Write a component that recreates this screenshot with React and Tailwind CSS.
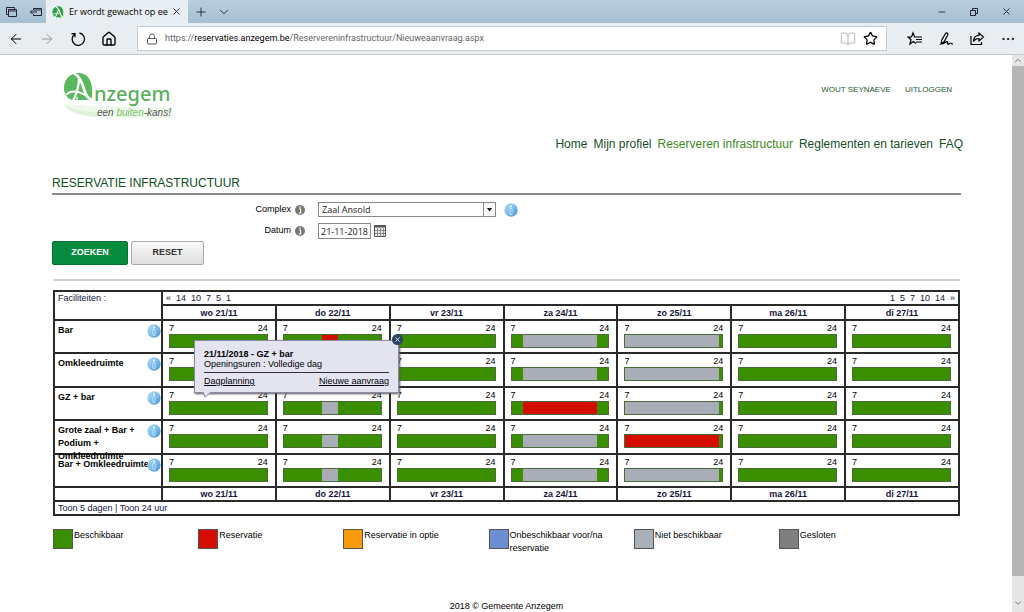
import React from "react";
import {
  ArrowLeft,
  ArrowRight,
  BookOpen,
  ChevronDown,
  ChevronUp,
  Ellipsis,
  House,
  Lock,
  Minus,
  Plus,
  Star,
  X,
} from "lucide-react";

const days = ["wo 21/11", "do 22/11", "vr 23/11", "za 24/11", "zo 25/11", "ma 26/11", "di 27/11"];

const open = [["free", 100]];
const weekend = [["free", 12], ["closed", 76], ["free", 12]];
const sunday = [["closed", 97], ["free", 3]];
const middle = [["free", 39], ["closed", 17], ["free", 44]];

const facilities = [
  { name: "Bar", slots: [open, [["free", 39], ["booked", 17], ["free", 44]], open, weekend, sunday, open, open] },
  { name: "Omkleedruimte", slots: [open, middle, open, weekend, sunday, open, open] },
  { name: "GZ + bar", slots: [open, middle, open, [["free", 12], ["booked", 76], ["free", 12]], sunday, open, open] },
  {
    name: "Grote zaal + Bar + Podium + Omkleedruimte",
    slots: [open, middle, open, weekend, [["booked", 97], ["free", 3]], open, open],
  },
  { name: "Bar + Omkleedruimte", slots: [open, middle, open, weekend, sunday, open, open] },
];

const slotColors = {
  free: "bg-[#3a8f00]",
  booked: "bg-[#d40d00]",
  closed: "bg-[#a9adb8]",
};

const legend = [
  { label: "Beschikbaar", color: "bg-[#3a8f00]" },
  { label: "Reservatie", color: "bg-[#d40d00]" },
  { label: "Reservatie in optie", color: "bg-[#f89a0c]" },
  { label: "Onbeschikbaar voor/na reservatie", color: "bg-[#6c8fd4]" },
  { label: "Niet beschikbaar", color: "bg-[#a9b0b8]" },
  { label: "Gesloten", color: "bg-[#7f7f7f]" },
];

const navItems = ["Home", "Mijn profiel", "Reserveren infrastructuur", "Reglementen en tarieven", "FAQ"];

function LeafMark({ className }) {
  return (
    <svg viewBox="0 0 30 30" className={className} aria-hidden="true">
      <path d="M14 1C6 2 1 7 1 15c0 6 3 11 8 13h19V15C28 6 22 0 14 1z" fill="#2f9e3c" />
      <g fill="none" stroke="#fff" strokeLinecap="round">
        <path d="M11 3c6 3 9 12 11 19 1 3 3 5 6 6" strokeWidth="3" />
        <path d="M16 8c-1 7-4 14-8 20" strokeWidth="2.6" />
        <path d="M4 20c5-4 12-3 18 1" strokeWidth="2" />
      </g>
    </svg>
  );
}

function Logo() {
  return (
    <svg viewBox="0 0 112 50" className="w-28 h-[50px]" role="img" aria-label="Anzegem">
      <path d="M2 33c16 2 62 3 108 4v10C60 48 8 46 2 33z" fill="#eef9eb" />
      <path d="M2 33c4 5 20 8 34 8v5C18 45 5 41 2 33z" fill="#dcf3d8" />
      <path d="M15 2C7 3 2 9 2 17c0 6 3 10 8 12h20V18C30 8 24 1 15 2z" fill="#5ab95f" />
      <g fill="none" stroke="#fff" strokeLinecap="round">
        <path d="M13 3c6 3 8 12 10 18 1 4 3 7 8 8" strokeWidth="2.8" />
        <path d="M17 7c0 8-2 15-6 23" strokeWidth="2.2" />
        <path d="M5 23c3-3 10-4 18 1" strokeWidth="1.8" />
        <path d="M15 26v4" strokeWidth="1.2" />
      </g>
      <text x="32" y="30" fontSize="20" fontWeight="500" fontFamily="Noto Sans, sans-serif" fill="#5ab05c">nzegem</text>
      <text x="35" y="45" fontSize="10" fontStyle="italic" fontFamily="Liberation Sans, sans-serif" fill="#555">
        een <tspan fill="#7ac46a">buiten</tspan>-kans!
      </text>
    </svg>
  );
}

function InfoBall({ className = "" }) {
  return (
    <svg viewBox="0 0 14 14" className={`w-[14px] h-[14px] shrink-0 ${className}`} aria-hidden="true">
      <defs>
        <linearGradient id="ball" x1="0" y1="0" x2="1" y2="1">
          <stop offset="0" stopColor="#b9dff7" />
          <stop offset="0.5" stopColor="#7dbdec" />
          <stop offset="1" stopColor="#3f8fd6" />
        </linearGradient>
      </defs>
      <circle cx="7" cy="7" r="6.700" fill="url(#ball)" />
      <circle cx="7" cy="3.500" r="1" fill="#fff" />
      <rect x="6" y="5.500" width="2" height="6" rx="0.500" fill="#5aa5e0" stroke="#fff" strokeWidth="0.700" />
    </svg>
  );
}

function InfoDot() {
  return (
    <svg viewBox="0 0 10 10" className="w-[10px] h-[10px] shrink-0" aria-hidden="true">
      <circle cx="5" cy="5" r="5" fill="#777" />
      <path d="M4 4h1.600v3.600M3.800 7.800h2.600M4.400 2.200h1.400" stroke="#fff" strokeWidth="1.200" fill="none" />
    </svg>
  );
}

function Browser() {
  return (
    <>
      {/* Title bar */}
      <div className="h-[23px] shrink-0 flex items-center bg-linear-to-b from-[#b9cede] to-[#a6bfd1] text-[#223]">
        <div className="w-[46px] flex items-center gap-3 pl-[6px] shrink-0">
          <svg viewBox="0 0 12 12" className="w-3 h-3" fill="none" stroke="currentColor" aria-hidden="true">
            <path d="M2.500 8.500h-2v-7h8v2M2.500 3.500h8v7h-8zM2.500 5h8" />
          </svg>
          <svg viewBox="0 0 12 12" className="w-3 h-3" fill="none" stroke="currentColor" aria-hidden="true">
            <path d="M3.500 4V2.500h8v7h-8V8M3.500 4h8M0.500 6H7M2.500 4l-2 2 2 2" />
          </svg>
        </div>
        <div className="w-[142px] h-full bg-[#e9eef2] flex items-center px-[6px]">
          <LeafMark className="w-3 h-3 shrink-0" />
          <span className="ml-[5px] flex-1 overflow-hidden whitespace-nowrap text-[9px] text-black font-['Open_Sans',sans-serif]">
            Er wordt gewacht op ee
          </span>
          <button aria-label="Tab sluiten"><X className="w-[11px] h-[11px]" strokeWidth={2} /></button>
        </div>
        <button className="ml-[6px]" aria-label="Nieuw tabblad"><Plus className="w-[14px] h-[14px]" strokeWidth={1.5} /></button>
        <button className="ml-[9px]" aria-label="Tabbladen"><ChevronDown className="w-[14px] h-[14px]" strokeWidth={1.5} /></button>
        <div className="ml-auto flex items-center gap-[22px] pr-3">
          <button aria-label="Minimaliseren"><Minus className="w-[10px] h-[10px]" /></button>
          <button aria-label="Vorig formaat">
            <svg viewBox="0 0 10 10" className="w-[10px] h-[10px]" fill="none" stroke="currentColor" aria-hidden="true">
              <path d="M1.500 3.500h5v5h-5zM3.500 3.500v-2h5v5h-2" />
            </svg>
          </button>
          <button aria-label="Sluiten"><X className="w-[11px] h-[11px]" /></button>
        </div>
      </div>

      {/* Address bar */}
      <div className="h-8 shrink-0 flex items-center bg-[#e8edf1] border-b border-[#c3c8cc] text-black">
        <div className="w-[137px] shrink-0 flex items-center gap-[15px] pl-2">
          <button aria-label="Terug"><ArrowLeft className="w-4 h-4" strokeWidth={1.5} /></button>
          <button aria-label="Vooruit" className="text-[#999]"><ArrowRight className="w-4 h-4" strokeWidth={1.5} /></button>
          <button aria-label="Vernieuwen">
            <svg viewBox="0 0 16 16" className="w-4 h-4" fill="none" stroke="currentColor" strokeWidth="1.300" aria-hidden="true">
              <path d="M9.500 2a6.200 6.200 0 1 1-5 1.200M1.500 2.700h3.500v3.500" />
            </svg>
          </button>
          <button aria-label="Startpagina"><House className="w-4 h-4" strokeWidth={2} /></button>
        </div>
        <div className="flex-1 h-[25px] bg-white border border-[#c4c9cd] flex items-center px-2">
          <Lock className="w-3 h-3 text-[#444]" strokeWidth={1.8} />
          <span className="ml-[7px] flex-1 text-[9px] text-[#666] whitespace-nowrap font-[Roboto,sans-serif]">
            https://<span className="text-black">reservaties.anzegem.be</span>/Reservereninfrastructuur/Nieuweaanvraag.aspx
          </span>
          <BookOpen className="w-4 h-4 text-[#bbb]" strokeWidth={1.5} />
          <Star className="w-[15px] h-[15px] ml-[7px]" strokeWidth={2} />
        </div>
        <div className="flex items-center gap-[15px] pl-5 pr-2">
          <button aria-label="Hub">
            <svg viewBox="0 0 16 16" className="w-4 h-4" fill="none" stroke="currentColor" strokeWidth="1.200" aria-hidden="true">
              <path d="M8.500 6H7.600L6 2 4.500 6H1l3 2.700L3 13l3.300-2.500L9 12.500M8.500 6H15M9 8.500h6M9 11h6" />
            </svg>
          </button>
          <button aria-label="Notities">
            <svg viewBox="0 0 16 16" className="w-4 h-4" fill="none" stroke="currentColor" strokeWidth="1.200" aria-hidden="true">
              <path d="M3 13l.8-4L7.500 2.500c.8-1.300 3-.3 2.300 1.200L6.300 10.500 3 13c3.500-.3 5.500-3 6.500-2.200s-.8 2.400.7 2.400 1.300-1.200 2.300-1.200.8 1 2.500.8" />
            </svg>
          </button>
          <button aria-label="Delen">
            <svg viewBox="0 0 16 16" className="w-4 h-4" fill="none" stroke="currentColor" strokeWidth="1.200" aria-hidden="true">
              <path d="M2 5v8.500h10.500V11M4.500 10.500C4.500 7 6.500 4.300 10 4.300V2l4.500 4L10 10V7.500c-2.500 0-4.300.8-5.500 3z" />
            </svg>
          </button>
          <button aria-label="Meer"><Ellipsis className="w-4 h-4" strokeWidth={1.5} /></button>
        </div>
      </div>
    </>
  );
}

function DayCell({ slots }) {
  return (
    <td className="border-2 border-[#2a2a2a] align-top pl-[6px] pr-[7px] pt-px">
      <div className="flex justify-between leading-[12px]">
        <span>7</span>
        <span>24</span>
      </div>
      <div className="flex h-[14px] border border-[#4c6b3a]">
        {slots.map(([kind, share], i) => (
          <div key={i} className={slotColors[kind]} style={{ width: `${share}%` }} />
        ))}
      </div>
    </td>
  );
}

function DayNames() {
  return days.map((day) => (
    <th key={day} className="border-2 border-[#2a2a2a] font-bold text-[#14143c]">
      {day}
    </th>
  ));
}

function Schedule() {
  return (
    <div className="relative mx-px mt-[9px]">
      <table className="w-full table-fixed border-collapse text-[9px] leading-[12px]">
        <colgroup>
          <col className="w-[108px]" />
        </colgroup>
        <thead>
          <tr className="h-[14px] text-[#14143c]">
            <td rowSpan={2} className="border-2 border-[#2a2a2a] align-top px-[3px]">Faciliteiten :</td>
            <td colSpan={7} className="border-2 border-[#2a2a2a] px-[3px]">
              <div className="flex gap-[5px]">
                {["«", "14", "10", "7", "5", "1"].map((n) => <a key={n} href="#terug">{n}</a>)}
                <span className="flex-1" />
                {["1", "5", "7", "10", "14", "»"].map((n) => <a key={n} href="#verder">{n}</a>)}
              </div>
            </td>
          </tr>
          <tr className="h-[15px]">
            <DayNames />
          </tr>
        </thead>
        <tbody>
          {facilities.map((facility) => (
            <tr key={facility.name} className="h-[33px] even:h-[34px]">
              <th className="border-2 border-[#2a2a2a] align-top text-left font-bold pl-[3px] pt-[3px]">
                <div className="flex h-[26px] leading-[13px]">
                  <span className="flex-1 -mr-1">{facility.name}</span>
                  <InfoBall />
                </div>
              </th>
              {facility.slots.map((slots, i) => <DayCell key={days[i]} slots={slots} />)}
            </tr>
          ))}
        </tbody>
        <tfoot>
          <tr className="h-[14px]">
            <td className="border-2 border-[#2a2a2a]" />
            <DayNames />
          </tr>
          <tr className="h-[14px] text-[#14143c]">
            <td colSpan={8} className="border-2 border-[#2a2a2a] px-[3px]">
              <a href="#dagen">Toon 5 dagen</a> | <a href="#uren">Toon 24 uur</a>
            </td>
          </tr>
        </tfoot>
      </table>

      {/* Day popup */}
      <div className="absolute left-[141px] top-[50px] w-[205px] px-[9px] pt-[8px] pb-[6px] bg-[#e4e4f0] border border-[#888aa0] shadow-[1px_1px_2px_#555] text-[9px] leading-[10px]">
        <p className="font-bold">21/11/2018 - GZ + bar</p>
        <p>Openingsuren : Volledige dag</p>
        <div className="flex justify-between mt-[3px] pt-[3px] border-t border-[#333] underline">
          <a href="#dagplanning">Dagplanning</a>
          <a href="#aanvraag">Nieuwe aanvraag</a>
        </div>
        <button aria-label="Sluiten" className="absolute -right-[5px] -top-[7px] w-[11px] h-[11px] rounded-full bg-[#2b4463] text-white flex items-center justify-center">
          <X className="w-[7px] h-[7px]" strokeWidth={3} />
        </button>
        <svg viewBox="0 0 8 5" className="absolute left-[8px] -bottom-[5px] w-2 h-[5px]" aria-hidden="true">
          <path d="M0 0h8L2 5z" fill="#e4e4f0" />
          <path d="M0 0l2 5 6-5" fill="none" stroke="#888aa0" />
        </svg>
      </div>
    </div>
  );
}

export default function App() {
  return (
    <div className="h-screen flex flex-col overflow-hidden bg-white text-black font-['Liberation_Sans',Arial,sans-serif]">
      <Browser />
      <div className="flex-1 min-h-0 flex">
        <main className="flex-1 min-w-0 pl-[52px] pr-[51px] text-[9px]">
          <header className="flex justify-between pt-4">
            <a href="#home" className="ml-[10px]"><Logo /></a>
            <div className="flex gap-[14px] mt-3 mr-[9px] text-[8px] leading-[14px] text-[#1d5a32]">
              <a href="#profiel">WOUT SEYNAEVE</a>
              <a href="#uitloggen">UITLOGGEN</a>
            </div>
          </header>
          <nav className="flex justify-end gap-[6px] mt-[15px] -mr-[2px] text-[12px] leading-4 text-[#12502a]">
            {navItems.map((item) => (
              <a key={item} href="#nav" className={item.startsWith("Reserveren") ? "text-[#3c8a1c]" : ""}>
                {item}
              </a>
            ))}
          </nav>

          <h1 className="mt-[23px] pb-[2px] text-[12px] leading-4 text-[#0f4f22] border-b-2 border-[#8a8a8a]">
            RESERVATIE INFRASTRUCTUUR
          </h1>

          <form className="mt-[7px]" onSubmit={(e) => e.preventDefault()}>
            <div className="flex items-center h-[15px]">
              <label htmlFor="complex" className="w-[239px] text-right">Complex</label>
              <span className="ml-1 mr-[13px]"><InfoDot /></span>
              <div className="relative">
                <select id="complex" className="appearance-none block w-[178px] h-[15px] px-[3px] border border-[#888] bg-white text-[9px] leading-[12px] font-['Open_Sans',sans-serif] text-[#222]">
                  <option>Zaal Ansold</option>
                </select>
                <svg viewBox="0 0 13 15" className="absolute right-0 top-0 w-[13px] h-[15px] pointer-events-none" aria-hidden="true">
                  <rect x=".5" y=".5" width="12" height="14" fill="#fafafa" stroke="#888" />
                  <path d="M4 6h5L6.500 9.500z" fill="#000" />
                </svg>
              </div>
              <InfoBall className="ml-2" />
            </div>
            <div className="flex items-center h-4 mt-[6px]">
              <label htmlFor="datum" className="w-[239px] text-right">Datum</label>
              <span className="ml-1 mr-[13px]"><InfoDot /></span>
              <input id="datum" defaultValue="21-11-2018" className="w-[53px] h-4 px-[2px] border border-[#888] text-[9px] font-['Open_Sans',sans-serif] text-[#222]" />
              <svg viewBox="0 0 12 12" className="w-3 h-3 ml-[3px]" fill="none" stroke="#555" aria-hidden="true">
                <path d="M.5.5h11v11H.5z" fill="#eee" />
                <path d="M0 1.500h12" strokeWidth="2" />
                <path d="M3.500 3v8M6.500 3v8M9.500 3v8M1 5.500h10M1 8.500h10" stroke="#888" />
              </svg>
            </div>
            <div className="flex gap-[3px] mt-[2px] font-bold">
              <button type="submit" className="w-[76px] h-6 rounded-[2px] bg-[#078b3f] border border-[#067033] text-white">ZOEKEN</button>
              <button type="reset" className="w-[73px] h-6 rounded-[2px] bg-linear-to-b from-[#fafafa] to-[#dedede] border border-[#aaa] text-[#333]">RESET</button>
            </div>
          </form>

          <hr className="mt-[14px] mx-px border-t-2 border-[#d2d2d2]" />
          <Schedule />

          <ul className="grid grid-cols-6 mt-[13px] ml-px mr-[37px] leading-[13px]">
            {legend.map((item) => (
              <li key={item.label} className="flex">
                <span className={`w-5 h-5 mr-px shrink-0 border border-[#555] ${item.color}`} />
                <span>{item.label}</span>
              </li>
            ))}
          </ul>
          <footer className="mt-[45px] text-center">2018 © Gemeente Anzegem</footer>
        </main>

        {/* Scrollbar */}
        <div className="w-3 shrink-0 flex flex-col items-center bg-[#e6e6e6] text-[#666]">
          <ChevronUp className="w-[10px] h-[11px]" />
          <div className="w-full flex-1 bg-[#b5b5b5]" />
          <ChevronDown className="w-[10px] h-[10px] mt-[22px] mb-1" />
        </div>
      </div>
    </div>
  );
}
